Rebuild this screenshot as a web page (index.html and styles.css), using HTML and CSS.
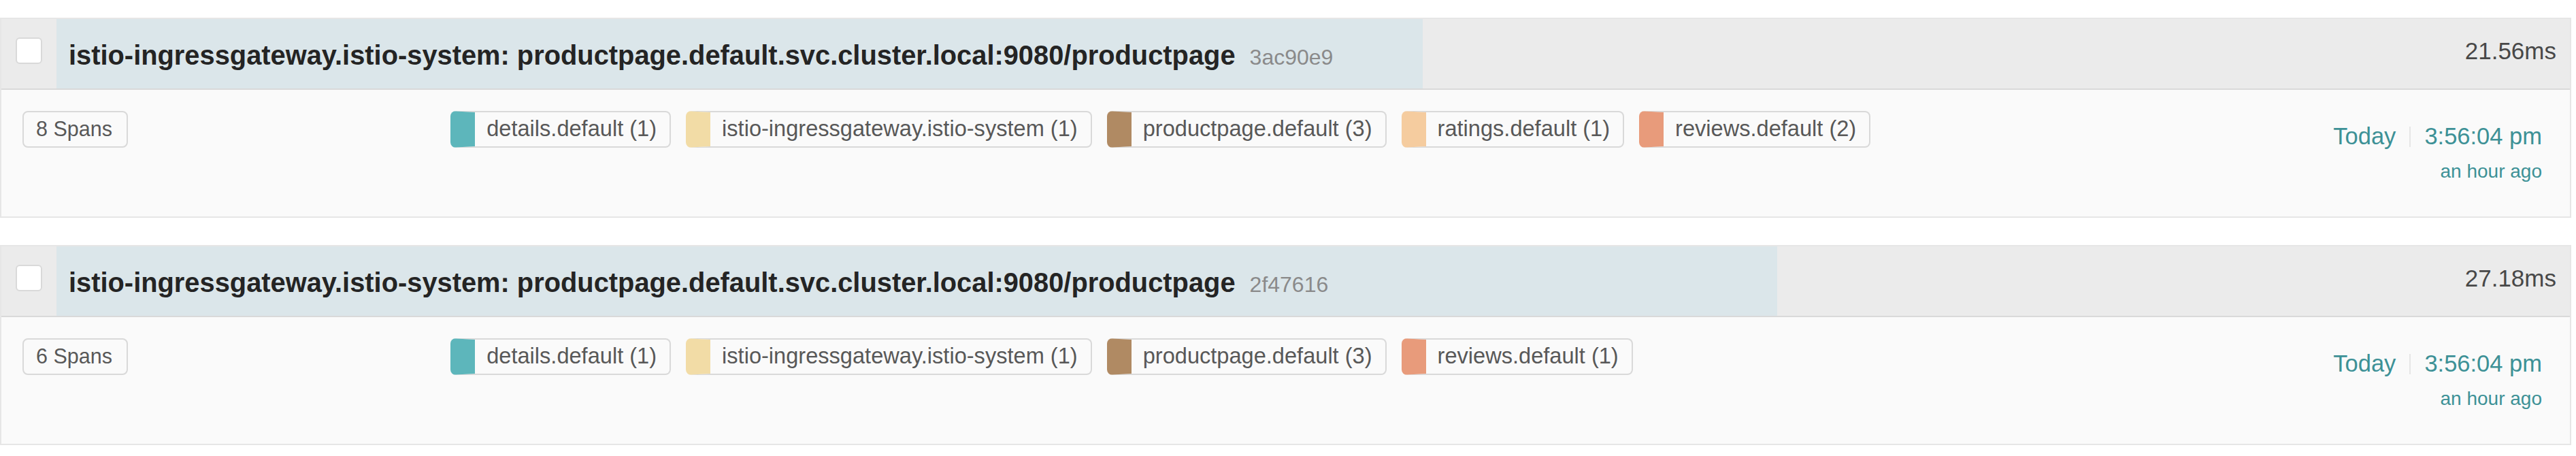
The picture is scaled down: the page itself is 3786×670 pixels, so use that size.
FILE: index.html
```html
<!DOCTYPE html>
<html lang="en">
<head>
<meta charset="utf-8">
<title>Trace results</title>
<link rel="stylesheet" href="styles.css">
</head>
<body>
<div class="results">
  <div class="result">
    <div class="title-row">
      <div class="check-cell"><span class="checkbox"></span></div>
      <a class="title-link">
        <span class="duration-bar" style="width:54.36%"></span>
        <h3 class="title">istio-ingressgateway.istio-system: productpage.default.svc.cluster.local:9080/productpage<small class="trace-id">3ac90e9</small></h3>
        <span class="duration">21.56ms</span>
      </a>
    </div>
    <div class="result-body">
      <div class="col col-spans"><span class="tag">8 Spans</span></div>
      <div class="col col-services">
        <ul class="service-tags">
          <li class="tag service-tag svc-details">details.default (1)</li>
          <li class="tag service-tag svc-gateway">istio-ingressgateway.istio-system (1)</li>
          <li class="tag service-tag svc-productpage">productpage.default (3)</li>
          <li class="tag service-tag svc-ratings">ratings.default (1)</li>
          <li class="tag service-tag svc-reviews">reviews.default (2)</li>
        </ul>
      </div>
      <div class="col col-time">
        <div class="time-line">Today<span class="divider"></span>3:56:04 pm</div>
        <small class="from-now">an hour ago</small>
      </div>
    </div>
  </div>

  <div class="result">
    <div class="title-row">
      <div class="check-cell"><span class="checkbox"></span></div>
      <a class="title-link">
        <span class="duration-bar" style="width:68.46%"></span>
        <h3 class="title">istio-ingressgateway.istio-system: productpage.default.svc.cluster.local:9080/productpage<small class="trace-id">2f47616</small></h3>
        <span class="duration">27.18ms</span>
      </a>
    </div>
    <div class="result-body">
      <div class="col col-spans"><span class="tag">6 Spans</span></div>
      <div class="col col-services">
        <ul class="service-tags">
          <li class="tag service-tag svc-details">details.default (1)</li>
          <li class="tag service-tag svc-gateway">istio-ingressgateway.istio-system (1)</li>
          <li class="tag service-tag svc-productpage">productpage.default (3)</li>
          <li class="tag service-tag svc-reviews">reviews.default (1)</li>
        </ul>
      </div>
      <div class="col col-time">
        <div class="time-line">Today<span class="divider"></span>3:56:04 pm</div>
        <small class="from-now">an hour ago</small>
      </div>
    </div>
  </div>
</div>
</body>
</html>
```

FILE: styles.css
```css
* {
  box-sizing: border-box;
}

html,
body {
  margin: 0;
  background: #ffffff;
}

body {
  font-family: "Liberation Sans", Arial, sans-serif;
}

.results {
  display: flex;
  flex-direction: column;
  gap: 40px;
  padding: 26px 7px 0 0;
}

.result {
  border: 2px solid #e6e6e6;
  background: #fafafa;
}

/* ---------- title row ---------- */
.title-row {
  display: flex;
  height: 104px;
  background: #ebebeb;
  border-bottom: 2px solid #d9d9d9;
}

.check-cell {
  flex: none;
  width: 81px;
  padding: 27px 0 0 21px;
}

.checkbox {
  display: block;
  width: 39px;
  height: 39px;
  background: #ffffff;
  border: 2px solid #d9d9d9;
  border-radius: 6px;
}

.title-link {
  flex: 1;
  position: relative;
  display: flex;
  align-items: flex-start;
  color: inherit;
  text-decoration: none;
  min-width: 0;
}

.duration-bar {
  position: absolute;
  left: 0;
  top: 0;
  bottom: 0;
  background: #dbe6ea;
}

.title {
  position: relative;
  margin: 0;
  padding: 33px 0 0 18px;
  font-size: 39.85px;
  line-height: 40px;
  font-weight: 700;
  color: #242424;
  white-space: nowrap;
}

.trace-id {
  margin-left: 21px;
  font-size: 32px;
  font-weight: 400;
  color: #8a8a8a;
}

.duration {
  position: relative;
  margin-left: auto;
  padding: 27px 20px 0 0;
  font-size: 35px;
  line-height: 40px;
  color: #484848;
}

/* ---------- body ---------- */
.result-body {
  display: grid;
  grid-template-columns: 1fr 4fr 1fr;
  height: 186px;
}

.col-spans,
.col-services {
  padding: 31px 31px 0;
}

.tag {
  display: inline-block;
  height: 54px;
  padding: 0 21px 0 18px;
  border: 2px solid #d9d9d9;
  border-radius: 8px;
  background: #fafafa;
  font-size: 30.5px;
  line-height: 48px;
  color: #585858;
  white-space: nowrap;
}

.service-tags {
  display: flex;
  flex-wrap: wrap;
  gap: 22px;
  margin: 0;
  padding: 0;
  list-style: none;
}

.service-tag {
  font-size: 32.6px;
  padding: 0 19px 0 17px;
  border-left-width: 36px;
}

.svc-details { border-left-color: #5db6bb; }
.svc-gateway { border-left-color: #f2dca6; }
.svc-productpage { border-left-color: #b08a63; }
.svc-ratings { border-left-color: #f5cc9f; }
.svc-reviews { border-left-color: #e89b7b; }

.col-time {
  padding: 42px 41px 0 0;
  text-align: right;
  color: #3d9196;
}

.time-line {
  font-size: 34.5px;
  line-height: 52px;
  white-space: nowrap;
}

.divider {
  display: inline-block;
  width: 2px;
  height: 30px;
  margin: 0 20px;
  background: #e6e6e6;
  vertical-align: -4px;
}

.from-now {
  display: block;
  font-size: 28px;
  line-height: 52px;
}
```
